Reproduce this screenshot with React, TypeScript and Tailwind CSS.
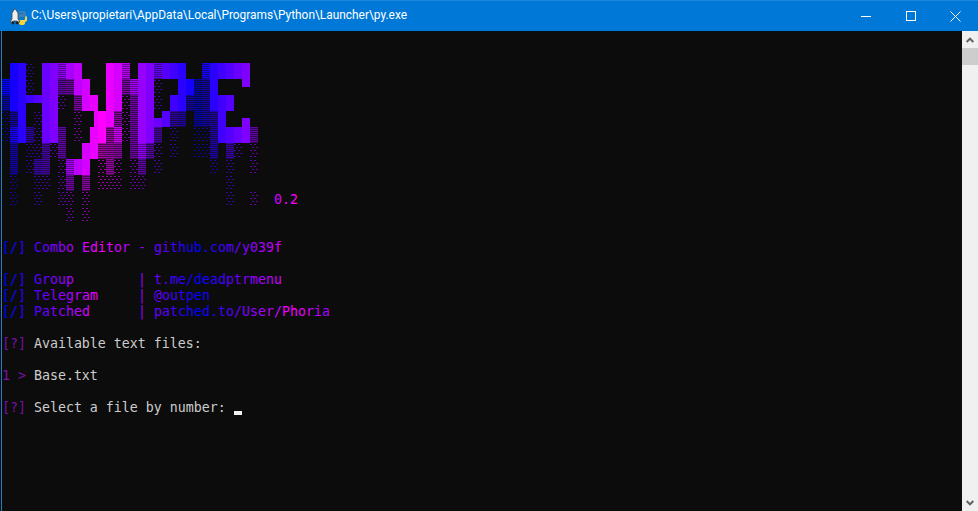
import { ReactNode } from "react";

// one string per text row of the banner, one letter per 8px cell
// F full, H dense shade, S shade, D light shade, T/B/R half blocks
const BANNER = [
  " FFD FFHFF   FFH FFHFFF  HFFFFF",
  "HFFD FFSSFF  FFSHFFD  FFSSF   T",
  "SFFTTFFD SFF FFDSFFD FFSSSFFF  ",
  "DSF DFF  D RFFSDSFFBFSS SSSF  B",
  "DHFSDFFS D FFSHDSFFS D  DDSFFFFS",
  " S DDSDS  FFSSS SHSD D  DDS SD D",
  " S DSS DHFF DSD DS D      D D  D",
  " D  DD DS S DDD DD          D",
  " D  D  DD D                 D  D",
  "        D D",
];

function gradient(col: number) {
  const pos = col % 24;
  const r = Math.round(255 * (1 - Math.abs(pos - 12) / 12));
  return `rgb(${r},0,255)`;
}

function Cell({ kind, col, row }: { kind: string; col: number; row: number }) {
  const x = col * 8;
  const y = row * 16;
  const color = gradient(col);

  if (kind === "F") return <rect x={x} y={y} width={8} height={16} fill={color} />;
  if (kind === "T") return <rect x={x} y={y} width={8} height={8} fill={color} />;
  if (kind === "B") return <rect x={x} y={y + 7} width={8} height={9} fill={color} />;
  if (kind === "R") return <rect x={x + 4} y={y} width={4} height={16} fill={color} />;

  if (kind === "S" || kind === "H") {
    return (
      <g fill={color}>
        <rect x={x} y={y} width={8} height={16} opacity={kind === "H" ? 0.55 : 0.28} />
        {[0, 2, 4, 6, 8, 10, 12, 14].map((n) => (
          <rect key={n} x={x} y={y + n} width={8} height={1} opacity={kind === "H" ? 0.9 : 0.45} />
        ))}
      </g>
    );
  }

  if (kind === "D") {
    return (
      <g fill={color} opacity={0.6}>
        {[1, 4, 7, 10, 13].map((n, i) => (
          <g key={n}>
            <rect x={x + (i % 2 ? 2 : 0)} y={y + n} width={2} height={1} />
            <rect x={x + (i % 2 ? 6 : 4)} y={y + n} width={2} height={1} />
          </g>
        ))}
      </g>
    );
  }
  return null;
}

function Banner() {
  return (
    <svg width={272} height={160} className="shrink-0">
      {BANNER.map((line, row) =>
        line.split("").map((kind, col) => <Cell key={`${row}-${col}`} kind={kind} col={col} row={row} />)
      )}
    </svg>
  );
}

// text where every character picks up the colour of its column
function Grad({ text, start = 0 }: { text: string; start?: number }) {
  return (
    <>
      {text.split("").map((ch, i) => (
        <span key={i} style={{ color: gradient(start + i) }}>
          {ch}
        </span>
      ))}
    </>
  );
}

function Row({ children }: { children?: ReactNode }) {
  return <div className="h-4 whitespace-pre pt-[1px] leading-4">{children}</div>;
}

function PythonIcon() {
  return (
    <svg width={17} height={17} viewBox="0 0 17 17" className="shrink-0">
      <path d="M15 8 h1 q1 0 1 2 v2 q0 2 -2 2 v1 q0 2 -3 2 q-3 0 -3 -2 v-2 q0 -1 2 -1 h3 q1 0 1 -1 z" fill="#ffd43b" />
      <path d="M9 3 h5 q2 0 2 2 v3 q0 1 -2 1 h-3 q-2 0 -2 2 h-2 v-3 q0 -2 2 -2 h4 v-1 h-4 z" fill="#3f7fb5" />
      <path d="M5 0.5 L8 5 L8 11 L10 14 L8 14 L7 13 L3 13 L2 14 L0 14 L2 11 L2 5 Z" fill="#eeeeee" stroke="#444" strokeWidth="0.8" />
      <circle cx="3" cy="15" r="1.4" fill="#222" />
      <circle cx="7" cy="15" r="1.4" fill="#222" />
    </svg>
  );
}

function TitleBar() {
  return (
    <div className="flex h-[31px] shrink-0 items-center border-t border-[#1e88dc] bg-[#0078d7] pl-[10px] text-white">
      <PythonIcon />
      <span className="ml-[4px] flex-1 truncate font-['Roboto',sans-serif] text-[11.9px]">
        C:\Users\propietari\AppData\Local\Programs\Python\Launcher\py.exe
      </span>
      <div className="flex h-full w-[45px] items-center justify-center">
        <div className="h-px w-[10px] bg-white" />
      </div>
      <div className="flex h-full w-[45px] items-center justify-center">
        <div className="h-[10px] w-[10px] border border-white" />
      </div>
      <div className="flex h-full w-[45px] items-center justify-center">
        <svg width={11} height={11} viewBox="0 0 11 11" stroke="white" strokeWidth="1">
          <path d="M0.5 0.5 L10.5 10.5 M10.5 0.5 L0.5 10.5" />
        </svg>
      </div>
    </div>
  );
}

function ScrollBar() {
  return (
    <div className="flex h-full w-4 shrink-0 flex-col bg-[#f0f0f0]">
      <div className="flex h-[17px] items-center justify-center">
        <svg width={8} height={6} viewBox="0 0 8 6" fill="none" stroke="#606060" strokeWidth="2">
          <path d="M0.7 5 L4 1.6 L7.3 5" />
        </svg>
      </div>
      <div className="h-[17px] bg-[#cdcdcd]" />
      <div className="flex-1" />
      <div className="flex h-[17px] items-center justify-center">
        <svg width={8} height={6} viewBox="0 0 8 6" fill="none" stroke="#606060" strokeWidth="2">
          <path d="M0.7 1 L4 4.4 L7.3 1" />
        </svg>
      </div>
    </div>
  );
}

const PROMPT = "text-[#7b10a8]";

export default function App() {
  return (
    <div className="flex h-[511px] w-[978px] flex-col overflow-hidden bg-[#0c0c0c]">
      <TitleBar />
      <div className="flex min-h-0 flex-1">
        <div className="ml-px w-px shrink-0 bg-[#1f7fc4]" />
        <div className="min-w-0 flex-1 pt-8 font-['DejaVu_Sans_Mono',monospace] text-[13.28px] text-[#cccccc]">
          <div className="flex h-40">
            <Banner />
            <div className="mt-[129px] h-4 leading-4">
              <Grad text="0.2" start={34} />
            </div>
          </div>
          <Row />
          <Row>
            <Grad text="[/] Combo Editor - github.com/y039f" />
          </Row>
          <Row />
          <Row>
            <Grad text="[/] Group        | t.me/deadptrmenu" />
          </Row>
          <Row>
            <Grad text="[/] Telegram     | @outpen" />
          </Row>
          <Row>
            <Grad text="[/] Patched      | patched.to/User/Phoria" />
          </Row>
          <Row />
          <Row>
            <span className={PROMPT}>[?]</span> Available text files:
          </Row>
          <Row />
          <Row>
            <span className={PROMPT}>1 &gt;</span> Base.txt
          </Row>
          <Row />
          <div className="flex h-4 whitespace-pre pt-[1px] leading-4">
            <span className={PROMPT}>[?]</span> Select a file by number:{" "}
            <div className="mt-[11px] h-1 w-2 bg-[#f2f2f2]" />
          </div>
        </div>
        <ScrollBar />
      </div>
    </div>
  );
}
